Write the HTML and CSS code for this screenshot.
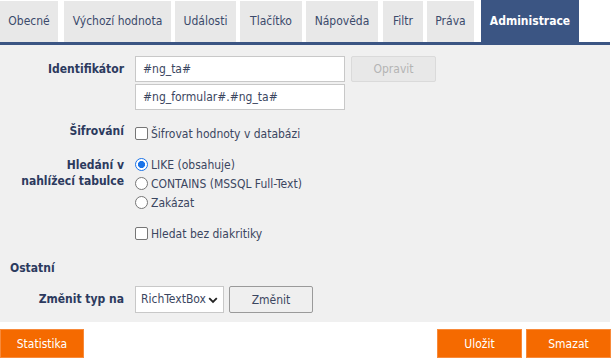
FILE: index.html
```html
<!DOCTYPE html>
<html lang="cs">
<head>
<meta charset="utf-8">
<title>Administrace</title>
<link rel="stylesheet" href="styles.css">
</head>
<body>
<div class="page">
  <nav class="tabs">
    <span class="tab t1">Obecné</span>
    <span class="tab t2">Výchozí hodnota</span>
    <span class="tab t3">Události</span>
    <span class="tab t4">Tlačítko</span>
    <span class="tab t5">Nápověda</span>
    <span class="tab t6">Filtr</span>
    <span class="tab t7">Práva</span>
    <span class="tab active t8">Administrace</span>
  </nav>
  <div class="tabline"></div>
  <div class="panel">
    <div class="row row-ident">
      <div class="label">Identifikátor</div>
      <div class="field">
        <div class="inline">
          <input class="text" type="text" value="#ng_ta#">
          <button class="btn disabled" disabled>Opravit</button>
        </div>
        <input class="text" type="text" value="#ng_formular#.#ng_ta#">
      </div>
    </div>
    <div class="row row-sifr">
      <div class="label">Šifrování</div>
      <div class="field">
        <label class="opt"><span class="cb"></span>Šifrovat hodnoty v databázi</label>
      </div>
    </div>
    <div class="row row-search">
      <div class="label">Hledání v<br>nahlížecí tabulce</div>
      <div class="field">
        <label class="opt"><span class="rb on"></span>LIKE (obsahuje)</label>
        <label class="opt"><span class="rb"></span>CONTAINS (MSSQL Full-Text)</label>
        <label class="opt"><span class="rb"></span>Zakázat</label>
        <label class="opt diak"><span class="cb"></span>Hledat bez diakritiky</label>
      </div>
    </div>
    <div class="section">Ostatní</div>
    <div class="row row-type">
      <div class="label">Změnit typ na</div>
      <div class="field inline">
        <div class="select">RichTextBox
          <svg class="chev" width="10" height="7" viewBox="0 0 10 7"><path d="M1.2 1.2 L5 5 L8.8 1.2" fill="none" stroke="#222" stroke-width="1.8"/></svg>
        </div>
        <button class="btn change">Změnit</button>
      </div>
    </div>
  </div>
  <div class="actions">
    <button class="obtn stat">Statistika</button>
    <div class="right">
      <button class="obtn">Uložit</button>
      <button class="obtn">Smazat</button>
    </div>
  </div>
</div>
</body>
</html>
```

FILE: styles.css
```css
* { box-sizing: border-box; }
body {
  margin: 0;
  background: #ffffff;
  font-family: "DejaVu Sans Condensed", "DejaVu Sans", sans-serif;
  font-size: 12px;
  color: #33405a;
}
.page { width: 612px; }
.tabs {
  display: flex;
  align-items: flex-end;
  height: 42px;
  gap: 4px;
}
.tab {
  display: block;
  height: 41px;
  line-height: 41px;
  text-align: center;
  background: #e8e8e8;
  color: #3b4a6b;
  font-size: 12px;
}
.t1 { width: 58px; }
.t2 { width: 107px; margin-left: 2px; }
.t3 { width: 61px; }
.t4 { width: 62px; }
.t5 { width: 72px; }
.t6 { width: 40px; margin-left: 1px; }
.t7 { width: 47px; }
.t8 { width: 98px; margin-left: 3px; }
.tab.active {
  height: 42px;
  line-height: 42px;
  background: #3b5583;
  color: #ffffff;
  font-weight: bold;
}
.tabline {
  width: 610px;
  height: 3px;
  background: #3b5583;
}
.panel {
  width: 610px;
  height: 277px;
  background: #f0f0f0;
  padding-top: 11px;
}
.row {
  display: flex;
  gap: 11px;
}
.label {
  width: 124px;
  flex: none;
  text-align: right;
  font-weight: bold;
  color: #2c3a5e;
  font-size: 12px;
}
.field { display: flex; flex-direction: column; }
.inline { display: flex; flex-direction: row; gap: 6px; align-items: center; }
.row-ident .label { line-height: 26px; }
.row-ident .field { gap: 2px; }
input.text {
  width: 210px;
  height: 26px;
  border: 1px solid #c8c8c8;
  background: #ffffff;
  padding: 0 7px;
  font: inherit;
  color: #3b4660;
}
.btn {
  height: 26px;
  font: inherit;
  border-radius: 2px;
}
.btn.disabled {
  width: 85px;
  background: #e8e8e8;
  border: 1px solid #dadada;
  color: #b4b4b4;
}
.row-sifr { margin-top: 14px; line-height: 14px; }
.row-sifr .label { line-height: 14px; }
.opt {
  display: flex;
  align-items: center;
  gap: 3px;
  height: 19px;
  color: #3b4660;
}
.cb {
  width: 13px;
  height: 13px;
  border: 1px solid #767676;
  border-radius: 2px;
  background: #ffffff;
  flex: none;
}
.rb {
  width: 13px;
  height: 13px;
  border: 1px solid #767676;
  border-radius: 50%;
  background: #ffffff;
  flex: none;
}
.rb.on {
  border: 1.5px solid #1a73e8;
  background: radial-gradient(circle, #1a73e8 0 3.3px, #ffffff 3.8px);
}
.row-search { margin-top: 12px; }
.row-search .label { line-height: 16px; padding-top: 2px; }
.diak { margin-top: 12px; }
.section {
  margin-top: 17px;
  padding-left: 10px;
  font-weight: bold;
  color: #2c3a5e;
  line-height: 16px;
}
.row-type { margin-top: 10px; }
.row-type .label { line-height: 27px; }
.select {
  position: relative;
  width: 89px;
  height: 27px;
  border: 1px solid #c8c8c8;
  background: #ffffff;
  line-height: 25px;
  padding-left: 5px;
  color: #3b4660;
}
.chev { position: absolute; right: 5px; top: 10px; }
.row-type .inline { gap: 5px; }
.btn.change {
  width: 84px;
  height: 27px;
  background: #efefef;
  border: 1px solid #9a9a9a;
  color: #3b4660;
}
.actions {
  display: flex;
  justify-content: space-between;
  width: 612px;
  margin-top: 7px;
}
.right { display: flex; gap: 4px; margin-right: 1px; }
.obtn {
  width: 85px;
  height: 29px;
  background: #f56a00;
  border: 1px solid #f88a3a;
  color: #ffffff;
  font: inherit;
  padding: 0;
}
.stat { width: 84px; }
```
